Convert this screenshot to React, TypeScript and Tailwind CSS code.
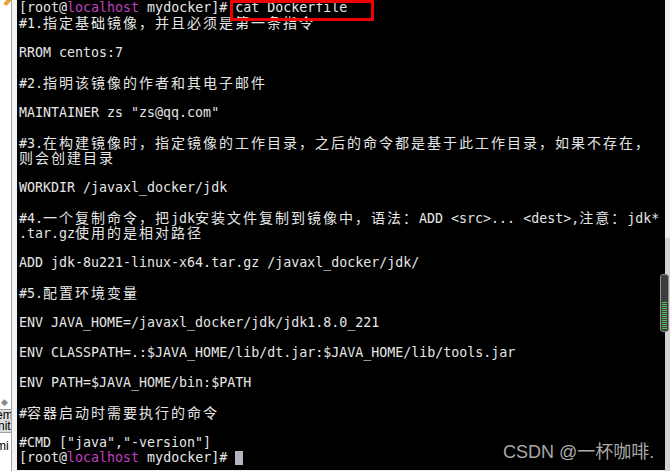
import React from "react";

const CJK = /([\u3000-\u303f\u4e00-\u9fff\uff00-\uffef]+)/;

function Seg({ text }: { text: string }) {
  const parts = text.split(CJK);
  return (
    <>
      {parts.map((p, i) =>
        i % 2 === 1 ? (
          <span
            key={i}
            className="text-[14px] tracking-[2px] leading-[15px]"
            style={{ fontFamily: '"Noto Sans CJK SC", sans-serif' }}
          >
            {p}
          </span>
        ) : (
          <span key={i}>{p}</span>
        )
      )}
    </>
  );
}

function Prompt({ children }: { children?: React.ReactNode }) {
  return (
    <div className="h-[15px] leading-[15px] whitespace-pre">
      <span>[root@</span>
      <span className="text-[#c23fc2]">localhost</span>
      <span> mydocker]# </span>
      {children}
    </div>
  );
}

const lines = [
  "#1.指定基础镜像，并且必须是第一条指令",
  "",
  "RROM centos:7",
  "",
  "#2.指明该镜像的作者和其电子邮件",
  "",
  'MAINTAINER zs "zs@qq.com"',
  "",
  "#3.在构建镜像时，指定镜像的工作目录，之后的命令都是基于此工作目录，如果不存在，",
  "则会创建目录",
  "",
  "WORKDIR /javaxl_docker/jdk",
  "",
  "#4.一个复制命令，把jdk安装文件复制到镜像中，语法：ADD <src>... <dest>,注意：jdk*",
  ".tar.gz使用的是相对路径",
  "",
  "ADD jdk-8u221-linux-x64.tar.gz /javaxl_docker/jdk/",
  "",
  "#5.配置环境变量",
  "",
  "ENV JAVA_HOME=/javaxl_docker/jdk/jdk1.8.0_221",
  "",
  "ENV CLASSPATH=.:$JAVA_HOME/lib/dt.jar:$JAVA_HOME/lib/tools.jar",
  "",
  "ENV PATH=$JAVA_HOME/bin:$PATH",
  "",
  "#容器启动时需要执行的命令",
  "",
  '#CMD ["java","-version"]',
];

export default function App() {
  return (
    <div className="relative w-[670px] h-[471px] overflow-hidden flex bg-[#f0f0f0]">
      {/* left partial window strip */}
      <div className="w-[17px] h-full flex bg-[#f3f3f3]">
        <div
          className="w-[12px] h-full bg-white border-r border-[#a6a6a6] flex flex-col text-[12px] text-black overflow-hidden"
          style={{ fontFamily: '"Liberation Sans", sans-serif' }}
        >
          <div className="h-[6px] relative">
            <div className="absolute left-[6px] top-[-3px] w-[4px] h-[9px] bg-[#e8a33a] rotate-45" />
          </div>
          <div className="flex-1" />
          <div className="text-[#8a8a8a] text-[9px] leading-[10px] pl-[1px]">◆</div>
          <div className="mt-[2px] bg-[#dcdcdc] border-y border-[#a0a0a0] leading-[11px] text-[12px]">
            <div className="-ml-[4px] whitespace-nowrap">em</div>
            <div className="-ml-[2px] whitespace-nowrap">nit</div>
          </div>
          <div className="mt-[7px] mb-[19px] leading-[12px] whitespace-nowrap -ml-[4px]">mi</div>
        </div>
      </div>

      {/* terminal */}
      <div
        className="flex-1 h-[470px] bg-black pl-[2px] text-[#e6e6e6] text-[13.3px]"
        style={{ fontFamily: '"DejaVu Sans Mono", monospace' }}
      >
        <Prompt>cat Dockerfile</Prompt>
        {lines.map((l, i) => (
          <div key={i} className="h-[15px] leading-[15px] whitespace-pre">
            <Seg text={l} />
          </div>
        ))}
        <Prompt>
          <span className="inline-block w-[8px] h-[14px] bg-[#b3b3bd] align-[-3px]" />
        </Prompt>
      </div>

      {/* right scrollbar strip */}
      <div className="w-[5px] h-full flex flex-col">
        <div className="h-[238px] bg-[#f0f0f0]" />
        <div className="flex-1 bg-[#d4d4d4]" />
      </div>

      {/* scroll thumb */}
      <div className="absolute left-[660px] top-[274px] w-[9px] h-[58px] rounded-[3px] border border-[#8f8f8f] bg-[#3c3c3c] flex flex-col justify-end items-center pb-[2px] gap-[1px]">
        {Array.from({ length: 14 }).map((_, i) => (
          <div key={i} className="w-[5px] h-[1px] bg-[#4fc35a]" />
        ))}
      </div>

      {/* red highlight box */}
      <div className="absolute left-[230px] top-[0px] w-[144px] h-[21px] border-[3px] border-[#f00000]" />

      {/* watermark */}
      <div
        className="absolute left-[503px] top-[441px] text-[18px] leading-[22px] text-[#a9a9a9] whitespace-nowrap"
        style={{ fontFamily: '"Liberation Sans", "Noto Sans CJK SC", sans-serif' }}
      >
        CSDN @一杯咖啡.
      </div>
    </div>
  );
}
